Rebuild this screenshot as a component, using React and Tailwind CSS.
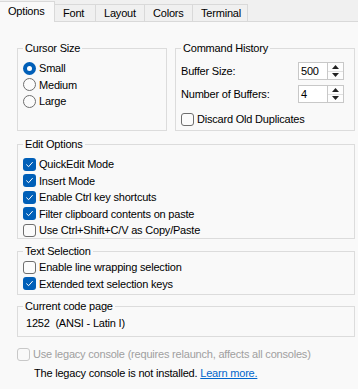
import React from "react";

const Check = ({ checked, disabled }) => (
  <span
    className={
      "flex h-[13px] w-[13px] shrink-0 items-center justify-center rounded-[3px] " +
      (checked
        ? "bg-[#005fb8]"
        : disabled
        ? "border border-[#c8c8c8] bg-[#f9f9f9]"
        : "border border-[#6e6e6e] bg-[#fbfbfb]")
    }
  >
    {checked && (
      <svg width="9" height="9" viewBox="0 0 9 9">
        <path d="M1.6 4.8 L3.6 6.7 L7.4 2.4" fill="none" stroke="#ffffff" strokeWidth="1" strokeLinecap="round" strokeLinejoin="round" />
      </svg>
    )}
  </span>
);

const Radio = ({ checked }) => (
  <span
    className={
      "flex h-[13px] w-[13px] shrink-0 items-center justify-center rounded-full " +
      (checked ? "bg-[#005fb8]" : "border border-[#6e6e6e] bg-[#fbfbfb]")
    }
  >
    {checked && <span className="h-[5px] w-[5px] rounded-full bg-white" />}
  </span>
);

const CheckRow = ({ checked, label, disabled }) => (
  <div className="flex h-[16.5px] items-center gap-[3px]">
    <Check checked={checked} disabled={disabled} />
    <span className={disabled ? "text-[#a0a0a0]" : ""}>{label}</span>
  </div>
);

const RadioRow = ({ checked, label }) => (
  <div className="flex h-[16.5px] items-center gap-[3px]">
    <Radio checked={checked} />
    <span>{label}</span>
  </div>
);

const Group = ({ title, className, children }) => (
  <fieldset className={"border border-[#dcdcdc] pl-[5px] " + className}>
    <legend className="px-[2px] leading-[14px]">{title}</legend>
    {children}
  </fieldset>
);

const Spin = ({ value }) => (
  <div className="flex h-[18px]">
    <div className="flex w-[30px] items-center border border-[#c8c8c8] bg-white pl-[2px]">{value}</div>
    <div className="flex w-[16px] flex-col border border-l-0 border-[#c8c8c8] bg-[#fdfdfd]">
      <div className="flex flex-1 items-center justify-center border-b border-[#e0e0e0]">
        <svg width="7" height="4" viewBox="0 0 7 4"><path d="M0 4 L3.5 0 L7 4 Z" fill="#222" /></svg>
      </div>
      <div className="flex flex-1 items-center justify-center">
        <svg width="7" height="4" viewBox="0 0 7 4"><path d="M0 0 L3.5 4 L7 0 Z" fill="#222" /></svg>
      </div>
    </div>
  </div>
);

const tabs = [
  { name: "Options", w: "w-[55px]" },
  { name: "Font", w: "w-[41px]" },
  { name: "Layout", w: "w-[49px]" },
  { name: "Colors", w: "w-[48px]" },
  { name: "Terminal", w: "w-[55px]" },
];

export default function App() {
  return (
    <div
      className="flex h-[389px] w-[358px] flex-col overflow-hidden bg-[#f9f9f9] text-[11px] tracking-[-0.2px] text-black"
      style={{ fontFamily: '"Liberation Sans", Arial, sans-serif' }}
    >
      <div className="flex h-[22px] items-end border-b border-[#d9d9d9] bg-[#f0f0f0]">
        {tabs.map((t, i) =>
          i === 0 ? (
            <div
              key={t.name}
              className={"relative -mb-px flex h-[21px] items-center border-r border-t border-[#d9d9d9] bg-[#f9f9f9] pb-[2px] pl-[8px] " + t.w}
            >
              {t.name}
            </div>
          ) : (
            <div
              key={t.name}
              className={"flex h-[17px] items-center border-r border-t border-[#d9d9d9] pl-[8px] " + t.w}
            >
              {t.name}
            </div>
          )
        )}
      </div>

      <div className="flex flex-col pl-[17px] pr-[3px]">
        <div className="mt-[19px] flex gap-[8px]">
          <Group title="Cursor Size" className="h-[90px] w-[150px]">
            <div className="mt-[5px]">
              <RadioRow checked label="Small" />
              <RadioRow label="Medium" />
              <RadioRow label="Large" />
            </div>
          </Group>
          <Group title="Command History" className="h-[90px] w-[180px]">
            <div className="mt-[7px] flex flex-col pr-[10px]">
              <div className="flex items-center justify-between">
                <span>Buffer Size:</span>
                <Spin value="500" />
              </div>
              <div className="mt-[5px] flex items-center justify-between">
                <span>Number of Buffers:</span>
                <Spin value="4" />
              </div>
              <div className="mt-[8px]">
                <CheckRow label="Discard Old Duplicates" />
              </div>
            </div>
          </Group>
        </div>

        <Group title="Edit Options" className="mt-[6px] h-[102px]">
          <div className="mt-[5px]">
            <CheckRow checked label="QuickEdit Mode" />
            <CheckRow checked label="Insert Mode" />
            <CheckRow checked label="Enable Ctrl key shortcuts" />
            <CheckRow checked label="Filter clipboard contents on paste" />
            <CheckRow label="Use Ctrl+Shift+C/V as Copy/Paste" />
          </div>
        </Group>

        <Group title="Text Selection" className="mt-[5px] h-[51px]">
          <div className="mt-[1px]">
            <CheckRow label="Enable line wrapping selection" />
            <CheckRow checked label="Extended text selection keys" />
          </div>
        </Group>

        <Group title="Current code page" className="mt-[4px] h-[38px]">
          <div className="mt-[3px] pl-[3px] leading-[14px]">1252&nbsp; (ANSI - Latin I)</div>
        </Group>

        <div className="mt-[9px]">
          <CheckRow disabled label="Use legacy console (requires relaunch, affects all consoles)" />
        </div>
        <div className="mt-[2px] pl-[17px] leading-[16px]">
          The legacy console is not installed.{" "}
          <span className="text-[#0066cc] underline">Learn more.</span>
        </div>
      </div>
    </div>
  );
}
